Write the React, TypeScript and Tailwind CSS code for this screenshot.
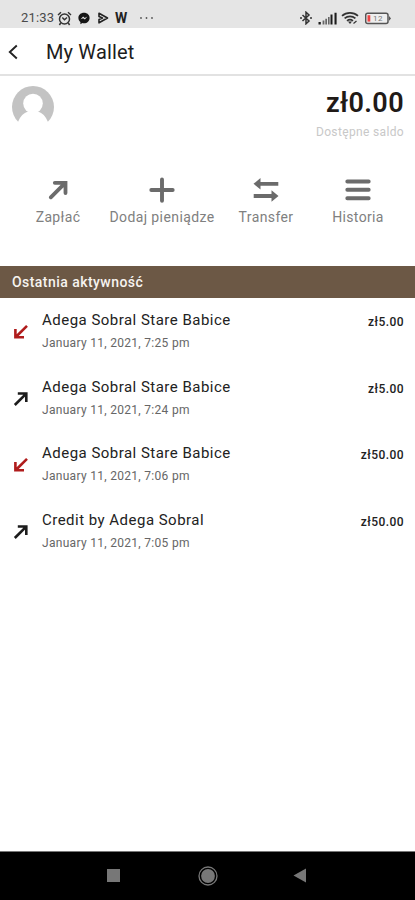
import React from 'react';

type Transaction = {
  title: string;
  date: string;
  amount: string;
  incoming: boolean;
};

// Recent activity
const transactions: Transaction[] = [
  { title: 'Adega Sobral Stare Babice', date: 'January 11, 2021, 7:25 pm', amount: 'zł5.00', incoming: false },
  { title: 'Adega Sobral Stare Babice', date: 'January 11, 2021, 7:24 pm', amount: 'zł5.00', incoming: true },
  { title: 'Adega Sobral Stare Babice', date: 'January 11, 2021, 7:06 pm', amount: 'zł50.00', incoming: false },
  { title: 'Credit by Adega Sobral', date: 'January 11, 2021, 7:05 pm', amount: 'zł50.00', incoming: true },
];

// Quick actions
const actions = [
  {
    label: 'Zapłać',
    tracking: 'tracking-[0.35px]',
    icon: (
      <path d="M5.8 20.3 L19.5 6.600 M9.8 5.8 H20.500 V16" strokeWidth="3.8" strokeLinecap="round" />
    ),
  },
  {
    label: 'Dodaj pieniądze',
    tracking: 'tracking-[0.4px]',
    icon: <path d="M13 2.500 V23.800 M2.300 13 H23.700" strokeWidth="3.900" strokeLinecap="round" />,
  },
  {
    label: 'Transfer',
    tracking: 'tracking-[0.4px]',
    icon: (
      <>
        <path d="M6 6.8 H25.3 M0.7 19 H20" strokeWidth="3.800" />
        <path d="M0.5 6.8 L7.5 1 V12.6 Z M25.5 19 L18.5 13.2 V24.8 Z" fill="currentColor" stroke="none" />
      </>
    ),
  },
  {
    label: 'Historia',
    tracking: 'tracking-[0.35px]',
    icon: <path d="M2.300 4.5 H23.700 M2.300 12.8 H23.700 M2.300 21.2 H23.700" strokeWidth="3.900" strokeLinecap="round" />,
  },
];

function StatusBar() {
  return (
    <div className="flex h-[28px] items-center bg-[#e5e5e5] pt-2 pl-[21px] text-[#333]">
      <span className="w-[36px] text-[13px] tracking-[0.2px] whitespace-nowrap text-[#4a4a4a]">21:33</span>
      {/* Alarm */}
      <svg width="15" height="15" viewBox="0 0 15 15" fill="none" stroke="currentColor" strokeWidth="1.5">
        <circle cx="7.5" cy="8" r="5" />
        <path d="M1 4 L4 1.3 M14 4 L11 1.3 M3.7 12 L2.4 14 M11.3 12 L12.6 14 M5.3 6.5 L7.5 8.7 L10 6.5" />
      </svg>
      {/* Messenger */}
      <svg className="ml-[6px]" width="12" height="13" viewBox="0 0 12 13">
        <path d="M6 .8C2.8.8.4 3 .4 6c0 1.700.8 3.100 2 4v2.200l2-1.100c.5.100 1 .2 1.600.2 3.200 0 5.600-2.300 5.600-5.300S9.200.8 6 .8Z" fill="#161616" />
        <path d="M2.600 7.300 L5.100 4.600 L6.800 6 L9.400 4.600 L6.900 7.600 L5.100 6.200 Z" fill="#e5e5e5" />
      </svg>
      {/* Play */}
      <svg className="ml-[7px]" width="12" height="12" viewBox="0 0 12 12" fill="none" stroke="#222" strokeWidth="1.6">
        <path d="M2 1.200 L10.500 6 L2 10.800 V7.500 L5.500 6 L2 4.500 Z" strokeLinejoin="round" />
      </svg>
      <span className="ml-[6px] w-[14px] text-[14px] leading-none font-bold text-[#222]">W</span>
      <svg className="ml-[10px]" width="15" height="4" viewBox="0 0 15 4" fill="#555">
        <circle cx="2" cy="2" r="0.9" />
        <circle cx="7.500" cy="2" r="0.9" />
        <circle cx="13" cy="2" r="0.9" />
      </svg>

      <div className="ml-auto flex items-center pr-[24px]">
        {/* Bluetooth */}
        <svg width="14" height="14" viewBox="0 0 14 14" fill="none" stroke="currentColor" strokeWidth="1.500">
          <path d="M3.500 4 L10 10 L7 12.800 V1.200 L10 4 L3.500 10" />
          <path d="M1 7 H3 M11 7 H13" strokeWidth="1.600" />
        </svg>
        {/* Signal */}
        <svg className="ml-[5px]" width="19" height="13" viewBox="0 0 19 13">
          <path d="M0.500 10 H2.800 V12.500 H0.500 Z M12.500 2.500 H14.500 V12.500 H12.500 Z M16.500 .8 H18.600 V12.500 H16.500 Z" fill="#1c1c1c" />
          <path d="M4.600 8.500 H6.400 V12.500 H4.600 Z M7.300 6.800 H9 V12.500 H7.300 Z M10 5 H11.600 V12.500 H10 Z" fill="#666" />
        </svg>
        {/* Wifi */}
        <svg className="ml-[4px]" width="18" height="14" viewBox="0 0 18 14" fill="none" stroke="currentColor" strokeWidth="1.700">
          <path d="M1 4.800 C5.500 .8 12.500 .8 17 4.800 M3.600 7.400 C6.700 4.800 11.300 4.800 14.400 7.400 M6 9.900 C7.800 8.500 10.200 8.500 12 9.900" />
          <path d="M7 10.500 H11 L9 13 Z" fill="currentColor" stroke="none" />
          <path d="M12.500 12.500 L15.500 10" strokeWidth="1.200" />
        </svg>
        {/* Battery */}
        <svg className="ml-[6px]" width="26" height="13" viewBox="0 0 26 13">
          <rect x="0.700" y="1.200" width="22.300" height="10.300" rx="2" fill="#eee" stroke="#555" strokeWidth="1.500" />
          <path d="M24 4 L26 6.400 L24 8.800 Z" fill="#555" />
          <rect x="2.500" y="3.200" width="2.800" height="6.400" fill="#ef4444" />
          <text x="8" y="9.400" fontSize="8" fill="#777" letterSpacing="0.500">12</text>
        </svg>
      </div>
    </div>
  );
}

function Arrow({ incoming }: { incoming: boolean }) {
  return (
    <svg
      width="16"
      height="16"
      viewBox="0 0 16 16"
      fill="none"
      strokeWidth="2.600"
      className={incoming ? 'stroke-[#1c1c1c]' : 'stroke-[#b01c1c]'}
    >
      {incoming ? <path d="M1.800 14 L13 2.800 M4.800 2.500 H13.300 V11" /> : <path d="M14 1.800 L2.800 13 M2.400 5 V13.300 H11" />}
    </svg>
  );
}

export default function App() {
  return (
    <div className="flex h-[900px] w-[415px] flex-col overflow-hidden bg-white font-[Roboto,sans-serif]">
      <StatusBar />

      {/* Header */}
      <header className="flex h-[48px] items-center border-b-2 border-[#e2e2e2] pt-px pl-[8px]">
        <svg width="10" height="16" viewBox="0 0 10 16" fill="none" stroke="#222" strokeWidth="1.900">
          <path d="M8.800 1.500 L1.800 8 L8.800 14.500" />
        </svg>
        <h1 className="ml-[28px] text-[20px] tracking-[0.15px] whitespace-nowrap text-[#1d1d1d]">My Wallet</h1>
      </header>

      {/* Balance */}
      <section className="flex h-[90px] justify-between pt-[10px] pr-[11px] pl-[12px]">
        <svg width="42" height="42" viewBox="0 0 42 42">
          <circle cx="21" cy="21" r="21" fill="#c3c3c3" />
          <circle cx="21" cy="17.500" r="9.800" fill="#fff" />
          <path d="M0 42 V36 H6 C8.500 30 11.500 27 16 25.500 H26 C30.500 27 33.500 30 36 36 H42 V42 Z" fill="#fff" />
        </svg>
        <div className="flex flex-col items-end whitespace-nowrap">
          <p className="pt-px text-[27px] leading-[32px] font-semibold tracking-[0.4px] text-[#211a17]">zł0.00</p>
          <p className="mt-[5px] text-[12px] leading-[16px] tracking-[0.35px] text-[#c8c8c8]">Dostępne saldo</p>
        </div>
      </section>

      {/* Actions */}
      <nav className="grid h-[100px] grid-cols-[104px_104px_104px_80px] pt-[11px] pl-[6px] text-[#6b6b6b]">
        {actions.map((action) => (
          <div key={action.label} className="flex flex-col items-center">
            <svg width="26" height="26" viewBox="0 0 26 26" fill="none" stroke="currentColor">
              {action.icon}
            </svg>
            <span className={`mt-[5px] text-[14px] leading-[18px] whitespace-nowrap text-[#808080] ${action.tracking}`}>
              {action.label}
            </span>
          </div>
        ))}
      </nav>

      <h2 className="flex h-[32px] items-center bg-[#6c5845] pl-[12px] text-[14px] font-medium tracking-[0.45px] text-[#f6f3ef]">
        Ostatnia aktywność
      </h2>

      {/* Activity list */}
      <ul className="grow">
        {transactions.map((item) => (
          <li key={item.date} className="flex h-[66.700px] pt-[12px] pr-[11px] pl-[13px] whitespace-nowrap">
            <div className="pt-[14px]">
              <Arrow incoming={item.incoming} />
            </div>
            <div className="ml-[13px] grow">
              <p className="text-[15px] leading-[20px] tracking-[0.48px] text-[#222]">{item.title}</p>
              <p className="mt-[5px] text-[12px] leading-[16px] tracking-[0.3px] text-[#666]">{item.date}</p>
            </div>
            <p className="pt-[3px] text-[12px] leading-[18px] font-medium tracking-[0.45px] text-[#222]">{item.amount}</p>
          </li>
        ))}
      </ul>

      {/* Android navigation */}
      <footer className="flex h-[49px] items-center border-t border-[#777] bg-black pl-[107px]">
        <div className="mb-px size-[13px] bg-[#777]" />
        <svg className="ml-[78px]" width="20" height="20" viewBox="0 0 20 20">
          <circle cx="10" cy="10" r="9" fill="none" stroke="#777" strokeWidth="1.300" />
          <circle cx="10" cy="10" r="6.900" fill="#777" />
        </svg>
        <svg className="mb-px ml-[75px]" width="13" height="15" viewBox="0 0 13 15">
          <path d="M13 0.500 V14.500 L0.500 7.500 Z" fill="#777" />
        </svg>
      </footer>
    </div>
  );
}
